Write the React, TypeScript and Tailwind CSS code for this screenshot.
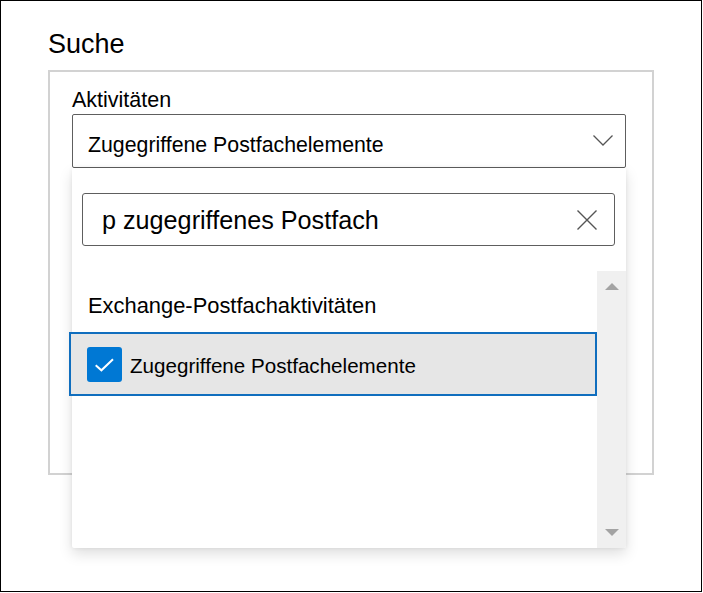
import React from "react";

export default function App() {
  return (
    <div
      className="w-[702px] h-[592px] border border-black bg-white pl-[47px] pt-[27px] text-black"
      style={{ fontFamily: '"Liberation Sans", Arial, sans-serif' }}
    >
      <h1 className="text-[27px] leading-[32px] font-normal mb-[10px]">Suche</h1>
      <div className="w-[606px] h-[405px] border-2 border-[#d2d2d2] pl-[22px] pt-[15px]">
        <div className="text-[21.5px] leading-[26px] mb-[1px]">Aktivitäten</div>
        <div className="relative w-[554px]">
          <div className="flex h-[54px] border border-[#5e5e5e] rounded-[2px] pl-[15px] pr-[12px]">
            <span className="flex-1 text-[21.3px] leading-[26px] pt-[17px]">Zugegriffene Postfachelemente</span>
            <svg width="20" height="11" viewBox="0 0 20 11" className="mt-[20px]">
              <path d="M0.5 0.5 L10 10 L19.5 0.5" fill="none" stroke="#555" strokeWidth="1.3" />
            </svg>
          </div>
          <div className="absolute left-0 top-full z-10 w-[554px] h-[380px] bg-white rounded-b-[2px] shadow-[0_6px_14px_rgba(0,0,0,0.13),0_0_4px_rgba(0,0,0,0.07)] flex flex-col">
            <div className="mt-[25px] ml-[10px] mr-[11px] h-[53px] border border-[#5e5e5e] rounded-[3px] flex items-center pl-[19px] pr-[17px]">
              <span className="flex-1 text-[25.2px] leading-[28px] pt-[1px]">p zugegriffenes Postfach</span>
              <svg width="20" height="20" viewBox="0 0 20 20">
                <path d="M0.5 0.5 L19.5 19.5 M19.5 0.5 L0.5 19.5" fill="none" stroke="#555" strokeWidth="1.4" />
              </svg>
            </div>
            <div className="mt-[25px] flex flex-1">
              <div className="flex-1 pt-[22px]">
                <div className="pl-[16px] text-[21.9px] leading-[26px]">Exchange-Postfachaktivitäten</div>
                <div className="-ml-[3px] mt-[13px] h-[64px] border-2 border-[#106ebe] bg-[#e6e6e6] flex items-center pl-[16px] gap-[8px]">
                  <div className="w-[35px] h-[35px] rounded-[3px] bg-[#0078d4] flex items-center justify-center">
                    <svg width="35" height="35" viewBox="0 0 35 35">
                      <path d="M8.7 18.3 L14.4 23.3 L26 12.3" fill="none" stroke="#fff" strokeWidth="2" />
                    </svg>
                  </div>
                  <span className="text-[20.6px] leading-[26px] mt-[3px]">Zugegriffene Postfachelemente</span>
                </div>
              </div>
              <div className="w-[29px] bg-[#f0f0f0] flex flex-col items-center justify-between py-[12px] rounded-br-[2px]">
                <svg width="14" height="7" viewBox="0 0 14 7">
                  <path d="M0 7 L7 0 L14 7 Z" fill="#a3a3a3" />
                </svg>
                <svg width="14" height="7" viewBox="0 0 14 7">
                  <path d="M0 0 L14 0 L7 7 Z" fill="#a3a3a3" />
                </svg>
              </div>
            </div>
          </div>
        </div>
      </div>
    </div>
  );
}
